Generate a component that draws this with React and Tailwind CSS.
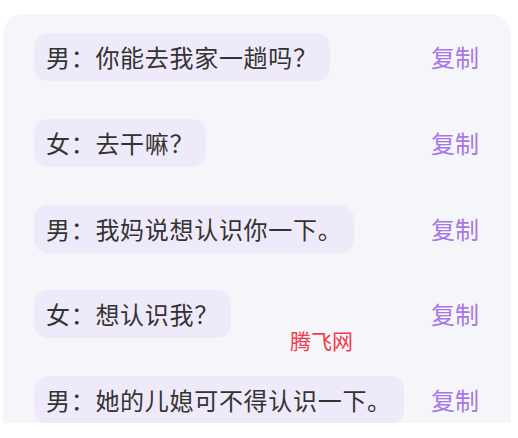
const lines = [
  '男：你能去我家一趟吗？',
  '女：去干嘛？',
  '男：我妈说想认识你一下。',
  '女：想认识我？',
  '男：她的儿媳可不得认识一下。',
]

export default function App() {
  return (
    <div className="bg-white w-[518px] h-[438px] pt-[14px] pl-[3px]" style={{ fontFamily: '"Noto Sans CJK SC", "Noto Sans", sans-serif' }}>
      <div className="relative w-[508px] h-[409px] overflow-hidden rounded-t-[20px] bg-[#f5f6f9] pt-[19px] pl-[31px] pr-[32px]">
        <div className="flex flex-col gap-[37.75px]">
          {lines.map((line, i) => (
            <div key={i} className="flex items-center justify-between">
              <div className="rounded-[14px] bg-[#efeaf9] px-3 py-1.5 text-[24px] leading-[36px] tracking-[0.7px] text-[#333333]">
                {line}
              </div>
              <span className="text-[24px] leading-[36px] text-[#a877e6]">复制</span>
            </div>
          ))}
        </div>

        {/* watermark */}
        <div className="absolute left-[287px] top-[313px] text-[21px] leading-[26px] text-[#f23a4e]">
          腾飞网
        </div>
      </div>
    </div>
  )
}
